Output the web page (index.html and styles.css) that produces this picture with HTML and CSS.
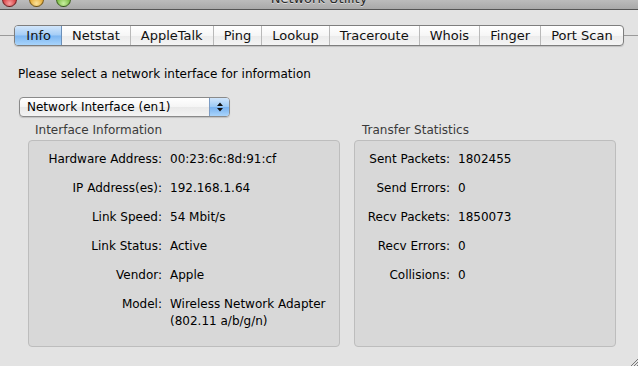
FILE: index.html
```html
<!DOCTYPE html>
<html>
<head>
<meta charset="utf-8">
<link rel="stylesheet" href="styles.css">
</head>
<body>
<div class="window">
  <div class="titlebar">
    <div class="lights">
      <span class="light red"></span>
      <span class="light yellow"></span>
      <span class="light green"></span>
    </div>
    <div class="title">Network Utility</div>
  </div>
  <div class="tabbar">
    <div class="rule"></div>
    <div class="segments">
      <div class="seg selected">Info</div>
      <div class="seg">Netstat</div>
      <div class="seg">AppleTalk</div>
      <div class="seg">Ping</div>
      <div class="seg">Lookup</div>
      <div class="seg">Traceroute</div>
      <div class="seg">Whois</div>
      <div class="seg">Finger</div>
      <div class="seg">Port Scan</div>
    </div>
    <div class="rule"></div>
  </div>
  <div class="content">
    <p class="prompt">Please select a network interface for information</p>
    <div class="popup">
      <span class="popup-text">Network Interface (en1)</span>
      <span class="popup-arrows">
        <svg width="8" height="10" viewBox="0 0 8 10"><path d="M4 0.5 L7 4 H1 Z M1 6 H7 L4 9.5 Z" fill="#111"/></svg>
      </span>
    </div>
    <div class="groups">
      <section class="group group-left">
        <h2 class="group-label">Interface Information</h2>
        <div class="box">
          <dl class="rows rows-left">
            <dt>Hardware Address:</dt><dd>00:23:6c:8d:91:cf</dd>
            <dt>IP Address(es):</dt><dd>192.168.1.64</dd>
            <dt>Link Speed:</dt><dd>54 Mbit/s</dd>
            <dt>Link Status:</dt><dd>Active</dd>
            <dt>Vendor:</dt><dd>Apple</dd>
            <dt>Model:</dt><dd>Wireless Network Adapter<br>(802.11 a/b/g/n)</dd>
          </dl>
        </div>
      </section>
      <section class="group group-right">
        <h2 class="group-label">Transfer Statistics</h2>
        <div class="box">
          <dl class="rows rows-right">
            <dt>Sent Packets:</dt><dd>1802455</dd>
            <dt>Send Errors:</dt><dd>0</dd>
            <dt>Recv Packets:</dt><dd>1850073</dd>
            <dt>Recv Errors:</dt><dd>0</dd>
            <dt>Collisions:</dt><dd>0</dd>
          </dl>
        </div>
      </section>
    </div>
  </div>
  <div class="grip">
    <svg width="8" height="8" viewBox="0 0 8 8"><path d="M8 1 L1 8 M8 4 L4 8 M8 7 L7 8" stroke="#777" stroke-width="1"/></svg>
  </div>
</div>
</body>
</html>
```

FILE: styles.css
```css
* { box-sizing: border-box; }
html, body {
  margin: 0;
  padding: 0;
}
body {
  width: 638px;
  height: 366px;
  overflow: hidden;
  background: #e3e3e3;
  font-family: "DejaVu Sans", "Lucida Grande", sans-serif;
  font-size: 12px;
  color: #000;
}
.window {
  position: relative;
  width: 638px;
  height: 366px;
  background: #e3e3e3;
}
.titlebar {
  height: 10px;
  background: linear-gradient(#bcbcbc, #a9a9a9);
  border-bottom: 1px solid #555;
  position: relative;
  overflow: hidden;
  display: flex;
  align-items: flex-end;
  justify-content: center;
}
.lights {
  position: absolute;
  left: 2px;
  bottom: 2px;
  display: flex;
  gap: 12px;
}
.light {
  width: 15px;
  height: 15px;
  border-radius: 50%;
  border: 1px solid rgba(0,0,0,0.45);
}
.red { background: radial-gradient(circle at 50% 80%, #f8a0a0, #d4383a 60%, #a01a1a); }
.yellow { background: radial-gradient(circle at 50% 80%, #fbe29a, #e3a62b 60%, #a87410); }
.green { background: radial-gradient(circle at 50% 80%, #c8efa0, #74b83c 60%, #3f7a1a); }
.title {
  font-size: 13px;
  line-height: 13px;
  color: #2a2a2a;
  margin-bottom: 4px;
  text-shadow: 0 1px 0 rgba(255,255,255,0.5);
}
.tabbar {
  margin-top: 15px;
  display: flex;
  align-items: center;
  height: 21px;
}
.rule {
  flex: 1;
  min-width: 11px;
  height: 1px;
  background: #9a9a9a;
}
.segments {
  display: flex;
  flex-shrink: 0;
  height: 21px;
  border: 1px solid #7e7e7e;
  border-radius: 4px;
  overflow: hidden;
  box-shadow: 0 1px 1px rgba(0,0,0,0.15);
  background: linear-gradient(#ffffff, #f6f6f6 50%, #ebebeb 51%, #f4f4f4);
}
.seg {
  font-size: 13px;
  line-height: 19px;
  padding: 0 10px;
  border-left: 1px solid #b9b9b9;
  color: #111;
  white-space: nowrap;
}
.seg:first-child { border-left: none; padding-left: 11px; }
.seg.selected {
  background: linear-gradient(#d2e6fb, #a4cdf6 48%, #7db6f1 52%, #a8d4fb);
  border-right: 1px solid #6b8fb8;
}
.seg.selected + .seg { border-left: none; }
.content {
  padding: 0 0 0 18px;
}
.prompt {
  margin: 21px 0 0;
  line-height: 15px;
  font-size: 12px;
}
.popup {
  margin: 15px 0 0 1px;
  width: 211px;
  height: 20px;
  display: flex;
  border: 1px solid #8a8a8a;
  border-radius: 4px;
  overflow: hidden;
  background: linear-gradient(#ffffff, #f5f5f5 50%, #e9e9e9 51%, #f3f3f3);
  box-shadow: 0 1px 1px rgba(0,0,0,0.15);
}
.popup-text {
  flex: 1;
  padding-left: 7px;
  line-height: 18px;
}
.popup-arrows {
  width: 20px;
  display: flex;
  align-items: center;
  justify-content: center;
  border-left: 1px solid #7c9cc4;
  background: linear-gradient(#d0e5fb, #9ccaf5 48%, #78b2f0 52%, #a9d4fb);
}
.groups {
  display: flex;
  gap: 14px;
  margin-left: 10px;
  margin-top: 6px;
}
.group-left { width: 312px; }
.group-right { width: 262px; }
.group-label {
  margin: 0 0 2px 7px;
  font-size: 12px;
  font-weight: normal;
  line-height: 15px;
  color: #3a3a3a;
}
.group-right .group-label { margin-left: 8px; }
.box {
  height: 207px;
  background: #d8d8d8;
  border: 1px solid #bdbdbd;
  border-radius: 4px;
  padding-top: 10px;
}
.rows {
  margin: 0;
  display: grid;
  row-gap: 12px;
  column-gap: 8px;
  line-height: 17px;
}
.rows-left { grid-template-columns: 133px 1fr; }
.rows-right { grid-template-columns: 95px 1fr; }
.rows dt {
  text-align: right;
  white-space: nowrap;
}
.rows dd {
  margin: 0;
  white-space: nowrap;
}
.grip {
  position: absolute;
  right: 0;
  bottom: 0;
  width: 8px;
  height: 8px;
}
.grip svg { display: block; }
```
